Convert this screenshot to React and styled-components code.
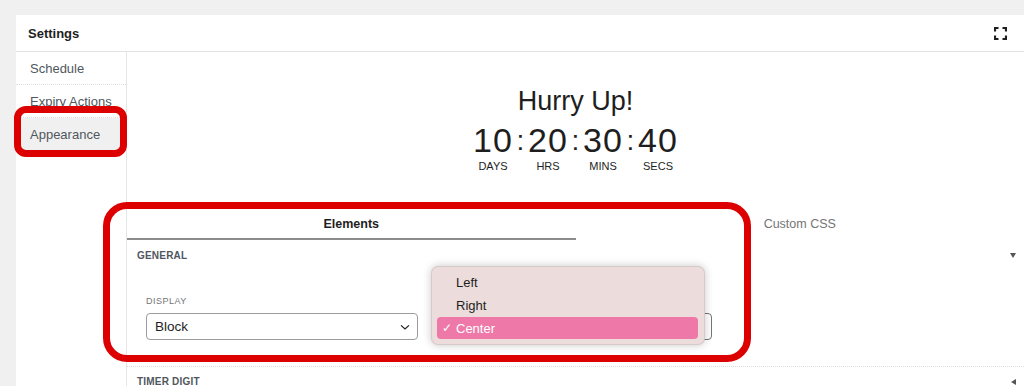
import React from 'react';
import styled, { createGlobalStyle } from 'styled-components';

const GlobalStyle = createGlobalStyle`
  body {
    margin: 0;
    padding: 0;
    background-color: #f0f0f0;
    font-family: 'Liberation Sans', Arial, sans-serif;
  }
`;

const Page = styled.div`
  position: relative;
  height: 386px;
  box-sizing: border-box;
  padding: 15px 0 0 16px;
  overflow: hidden;
`;

const Panel = styled.div`
  background-color: #fff;
  height: 100%;
  display: flex;
  flex-direction: column;
`;

const Header = styled.div`
  height: 36px;
  flex-shrink: 0;
  display: flex;
  align-items: center;
  justify-content: space-between;
  padding: 0 17px 0 12px;
  border-bottom: 1px solid #e2e2e2;
  > h1 {
    margin: 0;
    font-size: 13px;
    font-weight: 700;
    color: #1e1e1e;
  }
`;

const Body = styled.div`
  flex: 1;
  display: grid;
  grid-template-columns: 111px 1fr;
  min-height: 0;
`;

const Sidebar = styled.div`
  border-right: 1px solid #e6e6e6;
`;

const NavItem = styled.div`
  height: 33px;
  box-sizing: border-box;
  display: flex;
  align-items: center;
  padding-left: 14px;
  font-size: 13px;
  color: #50575e;
  border-bottom: 1px dotted #e0e0e0;
  background-color: ${(p) => (p.$active ? '#f0f0f0' : 'transparent')};
`;

const Main = styled.div`
  display: flex;
  flex-direction: column;
`;

const Timer = styled.div`
  padding-top: 33px;
  display: flex;
  flex-direction: column;
  align-items: center;
  color: #1e1e1e;
`;

const Title = styled.div`
  font-size: 27px;
  line-height: 32px;
`;

const Countdown = styled.div`
  display: flex;
  margin-top: 5px;
`;

const Unit = styled.div`
  width: 41px;
  display: flex;
  flex-direction: column;
  align-items: center;
  > b {
    font-weight: 400;
    font-size: 34px;
    line-height: 37px;
    letter-spacing: 1px;
  }
  > span {
    font-size: 11px;
    line-height: 14px;
  }
`;

const Colon = styled.div`
  width: 14px;
  text-align: center;
  font-size: 28px;
  line-height: 38px;
`;

const Tabs = styled.div`
  display: flex;
  margin-top: 34px;
`;

const Tab = styled.div`
  flex: 1;
  height: 33px;
  box-sizing: border-box;
  display: flex;
  align-items: center;
  justify-content: center;
  padding-top: 2px;
  font-size: 12.5px;
  color: ${(p) => (p.$active ? '#1e1e1e' : '#757575')};
  font-weight: ${(p) => (p.$active ? 700 : 400)};
  border-bottom: 2px solid ${(p) => (p.$active ? '#8c8c8c' : 'transparent')};
`;

const SectionHead = styled.div`
  height: 30px;
  box-sizing: border-box;
  display: flex;
  align-items: center;
  justify-content: space-between;
  padding: 0 8px 0 10px;
  font-size: 10px;
  font-weight: 700;
  color: #50575e;
  letter-spacing: 0.2px;
  border-top: ${(p) => (p.$divided ? '1px dotted #dcdcdc' : 'none')};
`;

const Caret = styled.i`
  width: 0;
  height: 0;
  border-top: ${(p) => (p.$left ? '3.5px solid transparent' : '5px solid #555')};
  border-bottom: ${(p) => (p.$left ? '3.5px solid transparent' : 'none')};
  border-left: ${(p) => (p.$left ? 'none' : '3.5px solid transparent')};
  border-right: ${(p) => (p.$left ? '5px solid #555' : '3.5px solid transparent')};
`;

const SectionBody = styled.div`
  padding: 25px 10px 26px 19px;
  display: grid;
  grid-template-columns: 272px 280px;
  gap: 14px;
`;

const Field = styled.div`
  position: relative;
  display: flex;
  flex-direction: column;
`;

const FieldLabel = styled.div`
  font-size: 9px;
  line-height: 12px;
  height: 12px;
  letter-spacing: 0.5px;
  color: #757575;
  margin-bottom: 6px;
`;

const Select = styled.div`
  height: 27px;
  box-sizing: border-box;
  border: 1px solid ${(p) => (p.$focused ? '#757575' : '#9a9ca0')};
  border-radius: 4px;
  display: flex;
  align-items: center;
  justify-content: space-between;
  padding: 0 4px 0 8px;
  font-size: 13.5px;
  color: #1e1e1e;
`;

const Menu = styled.div`
  position: absolute;
  left: -1px;
  top: -29px;
  width: 274px;
  box-sizing: border-box;
  padding: 4px 6px 4px 5px;
  background-color: #ecdcdc;
  border: 1px solid rgba(0, 0, 0, 0.08);
  border-radius: 7px;
  box-shadow: 0 0 9px rgba(0, 0, 0, 0.22);
`;

const MenuItem = styled.div`
  height: 22px;
  margin-bottom: 1px;
  display: flex;
  align-items: center;
  padding-left: 5px;
  font-size: 13px;
  border-radius: 4px;
  color: ${(p) => (p.$selected ? '#fff' : '#1e1e1e')};
  background-color: ${(p) => (p.$selected ? '#ee78a8' : 'transparent')};
  > em {
    font-style: normal;
    width: 14px;
    font-size: 12px;
  }
`;

const Annotation = styled.div`
  position: absolute;
  box-sizing: border-box;
  border: 7px solid #dc0000;
  pointer-events: none;
  left: ${(p) => p.$x}px;
  top: ${(p) => p.$y}px;
  width: ${(p) => p.$w}px;
  height: ${(p) => p.$h}px;
  border-radius: ${(p) => p.$r}px;
`;

const FullscreenIcon = () => (
  <svg width="13" height="13" viewBox="0 0 13 13" fill="none" stroke="#1e1e1e" strokeWidth="2.2">
    <path d="M1 4.5V1h3.5M8.5 1H12v3.5M12 8.5V12H8.5M4.5 12H1V8.5" />
  </svg>
);

const Chevron = () => (
  <svg width="16" height="16" viewBox="0 0 24 24" fill="none" stroke="#1e1e1e" strokeWidth="1.8">
    <path d="M6 9.5l6 5.5 6-5.5" />
  </svg>
);

const units = [
  { value: '10', label: 'DAYS' },
  { value: '20', label: 'HRS' },
  { value: '30', label: 'MINS' },
  { value: '40', label: 'SECS' },
];

export default function App() {
  return (
    <React.Fragment>
      <GlobalStyle />
      <Page>
        <Panel>
          <Header>
            <h1>Settings</h1>
            <FullscreenIcon />
          </Header>
          <Body>
            <Sidebar>
              <NavItem>Schedule</NavItem>
              <NavItem>Expiry Actions</NavItem>
              <NavItem $active>Appearance</NavItem>
            </Sidebar>
            <Main>
              <Timer>
                <Title>Hurry Up!</Title>
                <Countdown>
                  {units.map((u, i) => (
                    <React.Fragment key={u.label}>
                      {i > 0 && <Colon>:</Colon>}
                      <Unit>
                        <b>{u.value}</b>
                        <span>{u.label}</span>
                      </Unit>
                    </React.Fragment>
                  ))}
                </Countdown>
              </Timer>
              <Tabs>
                <Tab $active>Elements</Tab>
                <Tab>Custom CSS</Tab>
              </Tabs>
              <SectionHead>
                GENERAL
                <Caret />
              </SectionHead>
              <SectionBody>
                <Field>
                  <FieldLabel>DISPLAY</FieldLabel>
                  <Select>
                    Block
                    <Chevron />
                  </Select>
                </Field>
                <Field>
                  <FieldLabel />
                  <Select $focused />
                  <Menu>
                    <MenuItem>
                      <em />
                      Left
                    </MenuItem>
                    <MenuItem>
                      <em />
                      Right
                    </MenuItem>
                    <MenuItem $selected>
                      <em>✓</em>
                      Center
                    </MenuItem>
                  </Menu>
                </Field>
              </SectionBody>
              <SectionHead $divided>
                TIMER DIGIT
                <Caret $left />
              </SectionHead>
            </Main>
          </Body>
        </Panel>
        <Annotation $x={14} $y={106} $w={113} $h={51} $r={12} />
        <Annotation $x={103} $y={202} $w={648} $h={160} $r={24} />
      </Page>
    </React.Fragment>
  );
}
